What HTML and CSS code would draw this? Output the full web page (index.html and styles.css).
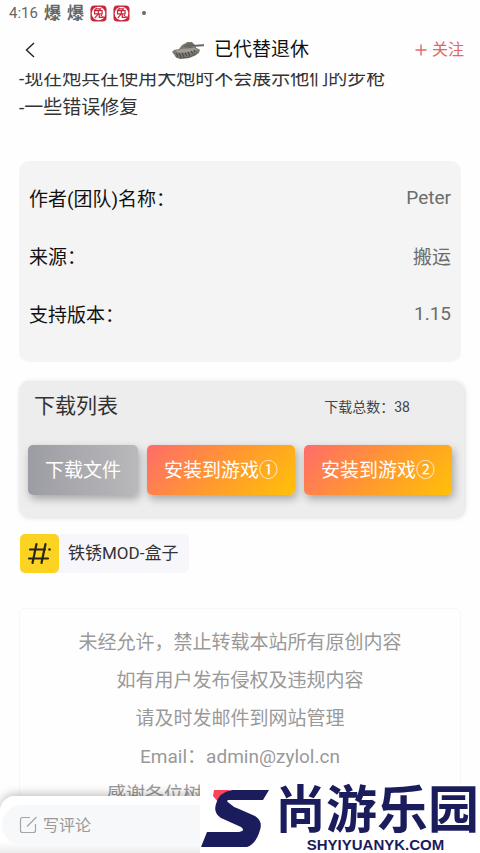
FILE: index.html
```html
<!DOCTYPE html>
<html lang="zh-CN">
<head>
<meta charset="utf-8">
<meta name="viewport" content="width=device-width, initial-scale=1">
<title>已代替退休</title>
<link rel="stylesheet" href="styles.css">
</head>
<body>
<div class="status">
  <span class="clock">4:16</span>
  <span class="notice-char">爆</span>
  <span class="notice-char">爆</span>
  <svg class="stamp" viewBox="0 0 18 18" aria-hidden="true"><rect x=".5" y=".5" width="17" height="17" rx="4" fill="#c9263c"/><circle cx="9" cy="9" r="7.2" fill="#fff"/><path d="M7.2 3.2 5 5.6M7 4.2h4l-1 1.6M4.8 6h8v3.4h-8zM8.8 6v3.4L5 14M9.8 9.4v3.8h4v-1.6M11.6 10.6l1 1" fill="none" stroke="#c9263c" stroke-width="1.3"/></svg>
  <svg class="stamp" viewBox="0 0 18 18" aria-hidden="true"><rect x=".5" y=".5" width="17" height="17" rx="4" fill="#c9263c"/><circle cx="9" cy="9" r="7.2" fill="#fff"/><path d="M7.2 3.2 5 5.6M7 4.2h4l-1 1.6M4.8 6h8v3.4h-8zM8.8 6v3.4L5 14M9.8 9.4v3.8h4v-1.6M11.6 10.6l1 1" fill="none" stroke="#c9263c" stroke-width="1.3"/></svg>
  <span class="dot"></span>
</div>

<header class="topbar">
  <button class="back" type="button" aria-label="返回"><svg viewBox="0 0 10 16" width="10" height="16"><path d="M9 1 1.5 8 9 15" fill="none" stroke="#222" stroke-width="1.4"/></svg></button>
  <div class="author">
    <svg class="tank" viewBox="0 0 34 20" width="34" height="20" aria-hidden="true">
      <path d="m1 12 2-2 5-1 3-4 4-2 1-1h5l2 2 1 1 9-.4v1.6l-8 .6v1l4 2-1 3-4 3-7 2.500-8 .7-4-1.500-2-3z" fill="#7d7a75"/>
      <path d="m4 11 7-2 12-1 4 1.500-6 2-13 1.500z" fill="#a19d96"/>
      <path d="m12 7 3-3 5-1 3 2-3 3z" fill="#69675f"/>
      <path d="m5 13 2 3m1-3 2 4m1-4 2 4m1-4 2 3m1-4 2 4m1-5 2 3m1-4 1 2" stroke="#4f4c49" stroke-width="1.2" fill="none"/>
      <path d="m5 16.500 5 1.500 9-1 7-4M22 5.500l11-.6" stroke="#5c5955" stroke-width="1" fill="none"/>
    </svg>
    <h1>已代替退休</h1>
  </div>
  <button class="follow" type="button"><svg viewBox="0 0 12 12" width="12" height="12" aria-hidden="true"><path d="M6 .5v11M.5 6h11" stroke="#e0695f" stroke-width="1.4"/></svg>关注</button>
</header>

<main class="content">
  <p class="changes">-现在炮兵在使用大炮时不会展示他们的步枪<br>-一些错误修复</p>

  <dl class="info">
    <div><dt>作者(团队)名称：</dt><dd>Peter</dd></div>
    <div><dt>来源：</dt><dd>搬运</dd></div>
    <div><dt>支持版本：</dt><dd>1.15</dd></div>
  </dl>

  <section class="downloads">
    <div class="downloads-head"><h2>下载列表</h2><span>下载总数：38</span></div>
    <div class="actions">
      <button class="action file" type="button">下载文件</button>
      <button class="action" type="button">安装到游戏①</button>
      <button class="action" type="button">安装到游戏②</button>
    </div>
  </section>

  <a class="tag" href="#">
    <svg viewBox="0 0 39 39" width="39" height="39" aria-hidden="true"><rect width="39" height="39" rx="5" fill="#fdd322"/><path d="M16.500 10 12.500 29M25.500 10 21.500 29M10 15.500h15M9 24.500h19" fill="none" stroke="#28251c" stroke-width="2.200" stroke-linecap="round"/><circle cx="29.500" cy="15.500" r="1.300" fill="#28251c"/></svg>
    <span>铁锈MOD-盒子</span>
  </a>

  <div class="legal">
    <p>未经允许，禁止转载本站所有原创内容</p>
    <p>如有用户发布侵权及违规内容</p>
    <p>请及时发邮件到网站管理</p>
    <p>Email：admin@zylol.cn</p>
    <p>感谢各位树友一直以来支持理解</p>
  </div>
</main>

<footer class="comment">
  <label class="comment-box">
    <svg viewBox="0 0 18 18" width="18" height="18" aria-hidden="true"><path d="M11 1.500H3.500a2 2 0 0 0-2 2v11a2 2 0 0 0 2 2h11a2 2 0 0 0 2-2V8M8 10.500 17.500 1" fill="none" stroke="#a5a5a8" stroke-width="1.200"/></svg>
    <input type="text" placeholder="写评论" aria-label="写评论">
  </label>
</footer>

<div class="brand">
  <svg viewBox="0 0 70 60" width="70" height="60" aria-hidden="true">
    <path d="M14 2h16L18 14l-5-6z" fill="#fb4459"/>
    <path d="M69 2 63 12H28q-2 1 1 3 4 4 10 6l16 7q8 5 5 14-4 14-13 17H1L7 44H39q7-1 2-5L21 30q-8-5-5-14Q19 4 32 2z" fill="#1b1c5c"/>
  </svg>
  <div class="brand-text"><strong>尚游乐园</strong><span>SHYIYUANYK.COM</span></div>
</div>
</body>
</html>
```
FILE: styles.css
```css
* { box-sizing: border-box; }

body {
  margin: 0;
  height: 100vh;
  display: flex;
  flex-direction: column;
  overflow: hidden;
  position: relative;
  background: #fefefe;
  color: #333;
  font-family: Roboto, "Noto Sans CJK SC", sans-serif;
  font-size: 19px;
}

h1, h2, p, dl, dd { margin: 0; font-weight: 400; }

button {
  border: 0;
  padding: 0;
  background: none;
  font: inherit;
}

.status {
  display: flex;
  align-items: center;
  gap: 6px;
  height: 26px;
  padding-left: 9px;
  color: #666;
  flex: none;
}
.clock { font-size: 15px; }
.notice-char { font-size: 17px; line-height: 26px; font-weight: 700; }
.stamp { width: 17px; height: 17px; }
.dot { width: 4px; height: 4px; margin-left: 6px; border-radius: 50%; background: #666; }

.topbar {
  display: grid;
  grid-template-columns: 1fr auto 1fr;
  align-items: center;
  height: 47px;
  padding: 0 16px;
  flex: none;
}
.back { display: flex; justify-self: start; padding-left: 9px; }
.author { display: flex; align-items: center; gap: 9px; color: #111; }
h1 { font-size: 19px; line-height: 28px; }
.follow {
  display: flex;
  align-items: center;
  gap: 5px;
  justify-self: end;
  color: #e0695f;
  font-size: 16px;
  line-height: 24px;
}

.content {
  flex: 1;
  min-height: 0;
  overflow: hidden;
  padding: 0 19px;
}
.changes { margin-top: -9px; line-height: 29px; }

.info {
  margin-top: 39px;
  padding: 7px 10px 20px;
  border-radius: 10px;
  background: #f4f4f4;
}
.info div {
  display: flex;
  justify-content: space-between;
  align-items: center;
  height: 58px;
}
.info dt { color: #111; }
.info dd { color: #6c6c6c; }

.downloads {
  margin: 19px -3px 0 0;
  padding: 5px 9px 22px;
  border-radius: 10px;
  background: #ededed;
  box-shadow: 1px 1px 5px rgba(0, 0, 0, .14);
}
.downloads-head {
  display: flex;
  justify-content: space-between;
  align-items: center;
  height: 36px;
  padding: 0 45px 0 6px;
}
.downloads-head span { margin-top: 4px; font-size: 14px; color: #444; }
h2 { font-size: 21px; }
.actions { display: flex; gap: 9px; margin-top: 23px; }
.action {
  height: 50px;
  padding: 0 17px 3px;
  border-radius: 5px;
  background: linear-gradient(135deg, #ff6b6b, #ff9830 50%, #ffc107);
  box-shadow: 2px 4px 8px rgba(0, 0, 0, .3);
  color: #fff;
  white-space: nowrap;
}
.file { background: linear-gradient(90deg, #9c9ca4, #b9b9bb); }

.tag {
  display: inline-flex;
  align-items: center;
  gap: 9px;
  margin: 17px 0 0 1px;
  padding-right: 11px;
  border-radius: 5px;
  background: #f7f7fb;
  color: #333;
  font-size: 17px;
  line-height: 39px;
  text-decoration: none;
  vertical-align: top;
}

.legal {
  margin-top: 35px;
  padding: 15px 0 20px;
  border: 1px solid #f7f7f7;
  border-radius: 5px;
  color: #999;
  line-height: 38px;
  text-align: center;
}

.comment {
  flex: none;
  margin-top: -20px;
  padding: 9px 2px 8px;
  border-radius: 15px 15px 0 0;
  background: linear-gradient(#fff 80%, #ececec);
  box-shadow: 0 -2px 10px rgba(0, 0, 0, .25);
  position: relative;
}
.comment-box {
  display: flex;
  align-items: center;
  gap: 6px;
  height: 40px;
  padding: 0 17px;
  border-radius: 20px;
  background: #f7f8fa;
}
.comment-box input {
  flex: 1;
  min-width: 0;
  border: 0;
  outline: 0;
  padding: 0;
  background: none;
  font: inherit;
  font-size: 16px;
}
.comment-box input::placeholder { color: #999; opacity: 1; }

/* Site mark laid over the bottom right corner */
.brand {
  position: absolute;
  right: 0;
  bottom: 0;
  display: flex;
  align-items: center;
  gap: 5px;
  height: 70px;
  padding-right: 1px;
  background: #fff;
  color: #1b1c5c;
}
.brand-text { display: flex; flex-direction: column; align-items: center; }
.brand strong { font-size: 51px; line-height: 54px; font-weight: 700; }
.brand span {
  font-family: "Liberation Sans", sans-serif;
  font-size: 15px;
  line-height: 14px;
  font-weight: 700;
  margin-right: 3px;
}
```
